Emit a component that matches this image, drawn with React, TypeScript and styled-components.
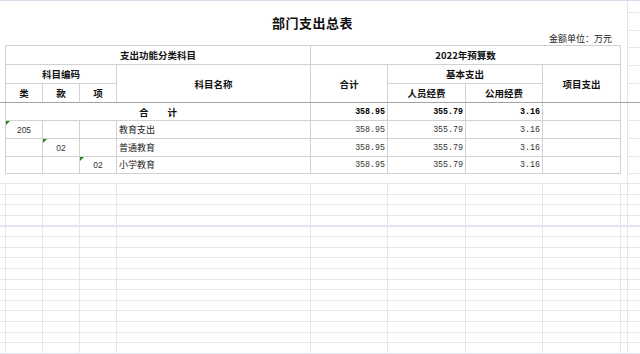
import React from "react";
import styled, { createGlobalStyle } from "styled-components";

const GlobalStyle = createGlobalStyle`
  html, body {
    margin: 0;
    padding: 0;
    background: #ffffff;
  }
  #root {
    width: 640px;
    height: 354px;
    overflow: hidden;
  }
`;

const CJK = `"Noto Sans CJK SC", "Noto Sans", sans-serif`;
const GRID = "#e2e6ef";
const CELL_LINE = "#d2d2d2";

type DataRow = {
  lei: string;
  kuan: string;
  xiang: string;
  name: string;
  total: string;
  staff: string;
  public: string;
  mark: 0 | 1 | 2;
};

const rows: DataRow[] = [
  { lei: "205", kuan: "", xiang: "", name: "教育支出", total: "358.95", staff: "355.79", public: "3.16", mark: 0 },
  { lei: "", kuan: "02", xiang: "", name: "普通教育", total: "358.95", staff: "355.79", public: "3.16", mark: 1 },
  { lei: "", kuan: "", xiang: "02", name: "小学教育", total: "358.95", staff: "355.79", public: "3.16", mark: 2 },
];

const colWidths = [37, 37, 37, 194, 77, 78, 77, 78];
const stripHeights = [12, 18, 17, 18, 18, 19, 18, 18, 18, 17];
const belowCols = [37, 37, 37, 194, 77, 78, 77, 78, 7, 13];

export default function App() {
  return (
    <Page>
      <GlobalStyle />
      <Top>
        <Main>
          <Header>
            <Title>部门支出总表</Title>
            <Unit>金额单位：万元</Unit>
          </Header>
          <Sheet>
            <colgroup>
              {colWidths.map((w, i) => (
                <col key={i} style={{ width: w }} />
              ))}
            </colgroup>
            <tbody>
              <Row $h={19}>
                <HeadCell colSpan={4}>支出功能分类科目</HeadCell>
                <HeadCell colSpan={4}>2022年预算数</HeadCell>
              </Row>
              <Row $h={19}>
                <HeadCell colSpan={3}>科目编码</HeadCell>
                <HeadCell rowSpan={2}>科目名称</HeadCell>
                <HeadCell rowSpan={2}>合计</HeadCell>
                <HeadCell colSpan={2}>基本支出</HeadCell>
                <HeadCell rowSpan={2}>项目支出</HeadCell>
              </Row>
              <Row $h={19}>
                <HeadCell>类</HeadCell>
                <HeadCell>款</HeadCell>
                <HeadCell>项</HeadCell>
                <HeadCell>人员经费</HeadCell>
                <HeadCell>公用经费</HeadCell>
              </Row>
              <Row $h={18}>
                <HeadCell colSpan={4}>合　　计</HeadCell>
                <NumCell $bold>358.95</NumCell>
                <NumCell $bold>355.79</NumCell>
                <NumCell $bold>3.16</NumCell>
                <TextCell />
              </Row>
              {rows.map((r, i) => (
                <Row key={i} $h={i === 2 ? 17 : 18}>
                  <CodeCell $flag={r.mark === 0}>{r.lei}</CodeCell>
                  <CodeCell $flag={r.mark === 1}>{r.kuan}</CodeCell>
                  <CodeCell $flag={r.mark === 2}>{r.xiang}</CodeCell>
                  <TextCell>{r.name}</TextCell>
                  <NumCell>{r.total}</NumCell>
                  <NumCell>{r.staff}</NumCell>
                  <NumCell>{r.public}</NumCell>
                  <TextCell />
                </Row>
              ))}
            </tbody>
          </Sheet>
        </Main>
        <Strip>
          {stripHeights.map((h, i) => (
            <StripCell key={i} $h={h} />
          ))}
        </Strip>
      </Top>
      <Below>
        <Margin />
        {belowCols.map((w, i) => (
          <BelowCol key={i} $w={w} />
        ))}
      </Below>
      <FreezeLine />
    </Page>
  );
}

const Page = styled.div`
  position: relative;
  width: 640px;
  height: 354px;
  box-sizing: border-box;
  border-top: 1px solid #d7dfeb;
  background: #ffffff;
  font-family: ${CJK};
  color: #111111;
`;

const Top = styled.div`
  display: flex;
  height: 182px;
`;

const Main = styled.div`
  width: 627px;
  display: flex;
  flex-direction: column;
  padding-left: 5px;
  box-sizing: border-box;
`;

const Header = styled.div`
  width: 615px;
  height: 44px;
  display: flex;
  flex-direction: column;
  padding-top: 12px;
  box-sizing: border-box;
`;

const Title = styled.div`
  height: 20px;
  line-height: 20px;
  text-align: center;
  font-size: 13px;
  font-weight: 700;
  letter-spacing: 0.5px;
`;

const Unit = styled.div`
  height: 12px;
  line-height: 12px;
  text-align: right;
  padding-right: 8px;
  font-size: 9px;
  color: #222222;
`;

const Sheet = styled.table`
  width: 615px;
  border-collapse: collapse;
  table-layout: fixed;
`;

const Row = styled.tr<{ $h: number }>`
  height: ${(p) => p.$h}px;
`;

const Cell = styled.td`
  border: 1px solid ${CELL_LINE};
  padding: 0 2px;
  overflow: hidden;
  white-space: nowrap;
  line-height: 12px;
  position: relative;
`;

const HeadCell = styled(Cell)`
  text-align: center;
  font-size: 9.5px;
  font-weight: 700;
  color: #111111;
`;

const TextCell = styled(Cell)`
  text-align: left;
  font-size: 9px;
  color: #222222;
`;

const CodeCell = styled(Cell)<{ $flag?: boolean }>`
  text-align: center;
  font-family: "Liberation Sans", Arial, sans-serif;
  font-size: 8.5px;
  color: #333333;

  &::before {
    content: "";
    display: ${(p) => (p.$flag ? "block" : "none")};
    position: absolute;
    left: 0;
    top: 0;
    width: 0;
    height: 0;
    border-top: 4px solid #1f8a1f;
    border-right: 4px solid transparent;
  }
`;

const NumCell = styled(Cell)<{ $bold?: boolean }>`
  text-align: right;
  font-family: "Liberation Mono", "DejaVu Sans Mono", monospace;
  font-size: 8.3px;
  font-weight: ${(p) => (p.$bold ? 700 : 400)};
  color: ${(p) => (p.$bold ? "#000000" : "#333333")};
`;

const Strip = styled.div`
  width: 13px;
  border-left: 1px solid ${GRID};
  box-sizing: border-box;
  display: flex;
  flex-direction: column;
`;

const StripCell = styled.div<{ $h: number }>`
  height: ${(p) => p.$h}px;
  border-bottom: 1px solid ${GRID};
  box-sizing: border-box;
`;

const Below = styled.div`
  display: flex;
  height: 171px;
  background: repeating-linear-gradient(
    to bottom,
    ${GRID} 0,
    ${GRID} 1px,
    transparent 1px,
    transparent 10.625px
  );
`;

const Margin = styled.div`
  width: 5px;
`;

const BelowCol = styled.div<{ $w: number }>`
  width: ${(p) => p.$w}px;
  border-left: 1px solid ${GRID};
  box-sizing: border-box;
`;

const FreezeLine = styled.div`
  position: absolute;
  left: 0;
  right: 0;
  top: 101px;
  height: 1px;
  background: #a3a3a3;
`;
